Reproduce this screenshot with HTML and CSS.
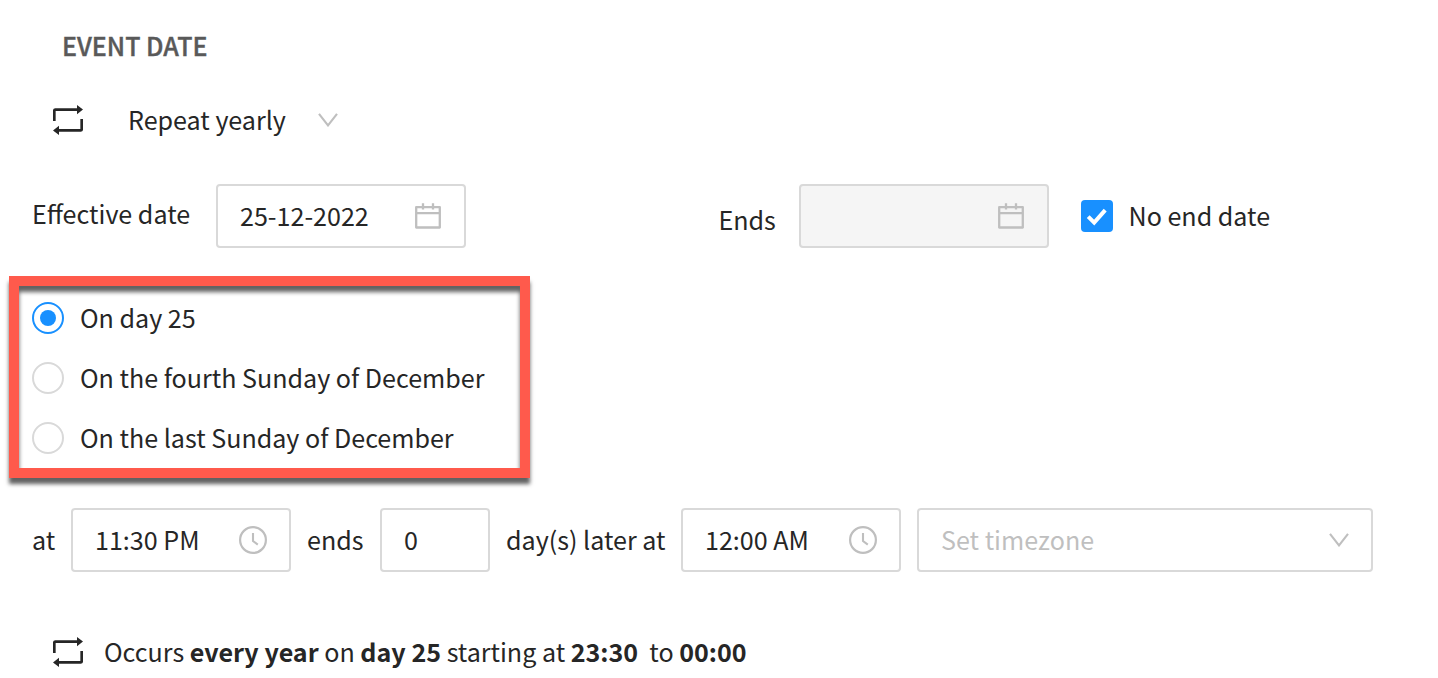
FILE: index.html
```html
<!DOCTYPE html>
<html lang="en">
<head>
  <meta charset="UTF-8">
  <meta name="viewport" content="width=device-width, initial-scale=1.0">
  <title>Event date</title>
  <link rel="stylesheet" href="styles.css">
</head>
<body>
  <svg class="sprite" width="0" height="0">
    <symbol id="repeat" viewBox="0 0 30 30">
      <path d="M1.3 16V5.6Q1.3 4.6 2.3 4.6H25M28.7 14V24.4Q28.7 25.4 27.7 25.4H5" fill="none" stroke="currentColor" stroke-width="2.7"/>
      <path d="M24 0L30 4.6L24 9.2ZM6 20.8L0 25.4L6 30Z" fill="currentColor"/>
    </symbol>
    <symbol id="chevron" viewBox="0 0 20 14">
      <path d="M1 .8L10 12.4L19 .8" fill="none" stroke="currentColor" stroke-width="2.1"/>
    </symbol>
    <symbol id="calendar" viewBox="0 0 26 26">
      <path d="M1.2 4.1H24.8V24.5H1.2ZM1.2 10.2H24.8M8 .3V6.4M18 .3V6.4" fill="none" stroke="currentColor" stroke-width="2.3" stroke-linejoin="round"/>
    </symbol>
    <symbol id="clock" viewBox="0 0 28 28">
      <circle cx="14" cy="14" r="12.9" fill="none" stroke="currentColor" stroke-width="2.2"/>
      <path d="M14 7V15L18.8 18.6" fill="none" stroke="currentColor" stroke-width="2.1"/>
    </symbol>
  </svg>

  <div class="event-form">
    <h2>EVENT DATE</h2>

    <div class="repeat-row">
      <svg class="icon-repeat"><use href="#repeat"/></svg>
      <span class="repeat-value">Repeat yearly</span>
      <svg class="icon-chevron"><use href="#chevron"/></svg>
    </div>

    <div class="date-row">
      <span class="label effective">Effective date</span>
      <div class="field date">
        <span>25-12-2022</span>
        <svg class="icon-calendar"><use href="#calendar"/></svg>
      </div>
      <span class="label ends">Ends</span>
      <div class="field date disabled">
        <span></span>
        <svg class="icon-calendar"><use href="#calendar"/></svg>
      </div>
      <span class="checkbox">
        <svg width="32" height="32" viewBox="0 0 32 32"><path d="M7.2 16.6L13.2 22.6L24.2 10.2" fill="none" stroke="#fff" stroke-width="4"/></svg>
      </span>
      <span class="label">No end date</span>
    </div>

    <div class="options">
      <div class="option"><span class="radio checked"></span><span class="label">On day 25</span></div>
      <div class="option"><span class="radio"></span><span class="label">On the fourth Sunday of December</span></div>
      <div class="option"><span class="radio"></span><span class="label">On the last Sunday of December</span></div>
    </div>

    <div class="time-row">
      <span class="label at">at</span>
      <div class="field time">
        <span>11:30 PM</span>
        <svg class="icon-clock"><use href="#clock"/></svg>
      </div>
      <span class="label time-ends">ends</span>
      <div class="field days"><span>0</span></div>
      <span class="label later">day(s) later at</span>
      <div class="field time">
        <span>12:00 AM</span>
        <svg class="icon-clock"><use href="#clock"/></svg>
      </div>
      <div class="field timezone">
        <span>Set timezone</span>
        <svg class="icon-chevron"><use href="#chevron"/></svg>
      </div>
    </div>

    <div class="summary">
      <svg class="icon-repeat"><use href="#repeat"/></svg>
      <p>Occurs <b>every year</b> on <b>day 25</b> starting at <b>23:30</b>&nbsp; to <b>00:00</b></p>
    </div>
  </div>
</body>
</html>
```
FILE: styles.css
```css
* {
  box-sizing: border-box;
}
body {
  margin: 0;
  background: #fff;
  color: #262626;
  font-family: "Noto Sans CJK SC", "Noto Sans", sans-serif;
  font-size: 25.08px;
  line-height: 40px;
  white-space: nowrap;
  overflow: hidden;
}
svg {
  display: block;
  flex: none;
}
.sprite {
  position: absolute;
}
.event-form {
  height: 678px;
  padding-top: 25px;
}
h2 {
  margin: 0 0 33px 62px;
  font-size: 25px;
  font-weight: 500;
  color: #595959;
  -webkit-text-stroke: 0.4px #595959;
}
.repeat-row {
  display: flex;
  align-items: center;
  height: 44px;
  padding-left: 53px;
}
.icon-repeat {
  width: 30px;
  height: 30px;
}
.repeat-value {
  width: 235px;
  padding: 0 0 2px 45px;
}
.icon-chevron {
  width: 20px;
  height: 14px;
  color: #bfbfbf;
}
.date-row, .time-row {
  display: flex;
  align-items: center;
  height: 64px;
  padding-left: 32px;
}
.date-row {
  margin-top: 42px;
}
.label {
  flex: none;
  padding-bottom: 2px;
}
.effective {
  width: 184px;
  padding-bottom: 6px;
}
.ends {
  width: 80.5px;
  margin-left: 252.5px;
  padding-top: 8px;
}
.field {
  flex: none;
  display: flex;
  align-items: center;
  justify-content: space-between;
  height: 64px;
  padding: 0 22px;
  border: 2px solid #d9d9d9;
  border-radius: 4px;
}
.field span {
  padding-bottom: 2px;
}
.date {
  width: 250px;
}
.disabled {
  background: #f5f5f5;
}
.icon-calendar {
  width: 26px;
  height: 26px;
  margin-right: 1px;
  color: #bfbfbf;
}
.checkbox {
  flex: none;
  width: 32px;
  height: 32px;
  margin: 0 15.5px 0 32px;
  border-radius: 4px;
  background: #1890ff;
}
.options {
  width: 521px;
  height: 202px;
  margin: 28px 0 0 9px;
  padding: 2px 13px;
  border: 10px solid #ff5a4c;
  box-shadow: 0 6px 4px rgba(0, 0, 0, 0.62), inset 0 6px 4px rgba(0, 0, 0, 0.62);
}
.option {
  display: flex;
  align-items: center;
  gap: 16px;
  height: 60px;
}
.radio {
  flex: none;
  display: flex;
  align-items: center;
  justify-content: center;
  width: 32px;
  height: 32px;
  border: 2px solid #d9d9d9;
  border-radius: 50%;
}
.checked {
  border-color: #1890ff;
}
.checked::after {
  content: "";
  width: 16px;
  height: 16px;
  border-radius: 50%;
  background: #1890ff;
}
.time-row {
  margin-top: 30px;
}
.at {
  width: 39px;
}
.time {
  width: 220px;
}
.icon-clock {
  width: 28px;
  height: 28px;
  color: #bfbfbf;
}
.time-ends {
  width: 89px;
  padding-left: 16px;
}
.days {
  width: 110px;
}
.later {
  width: 191px;
  padding-left: 16px;
}
.timezone {
  width: 456px;
  margin-left: 16px;
  color: #bfbfbf;
}
.summary {
  display: flex;
  align-items: center;
  height: 40px;
  margin-top: 60px;
  padding-left: 53px;
}
.summary p {
  margin: 0 0 2px 21px;
}
```
